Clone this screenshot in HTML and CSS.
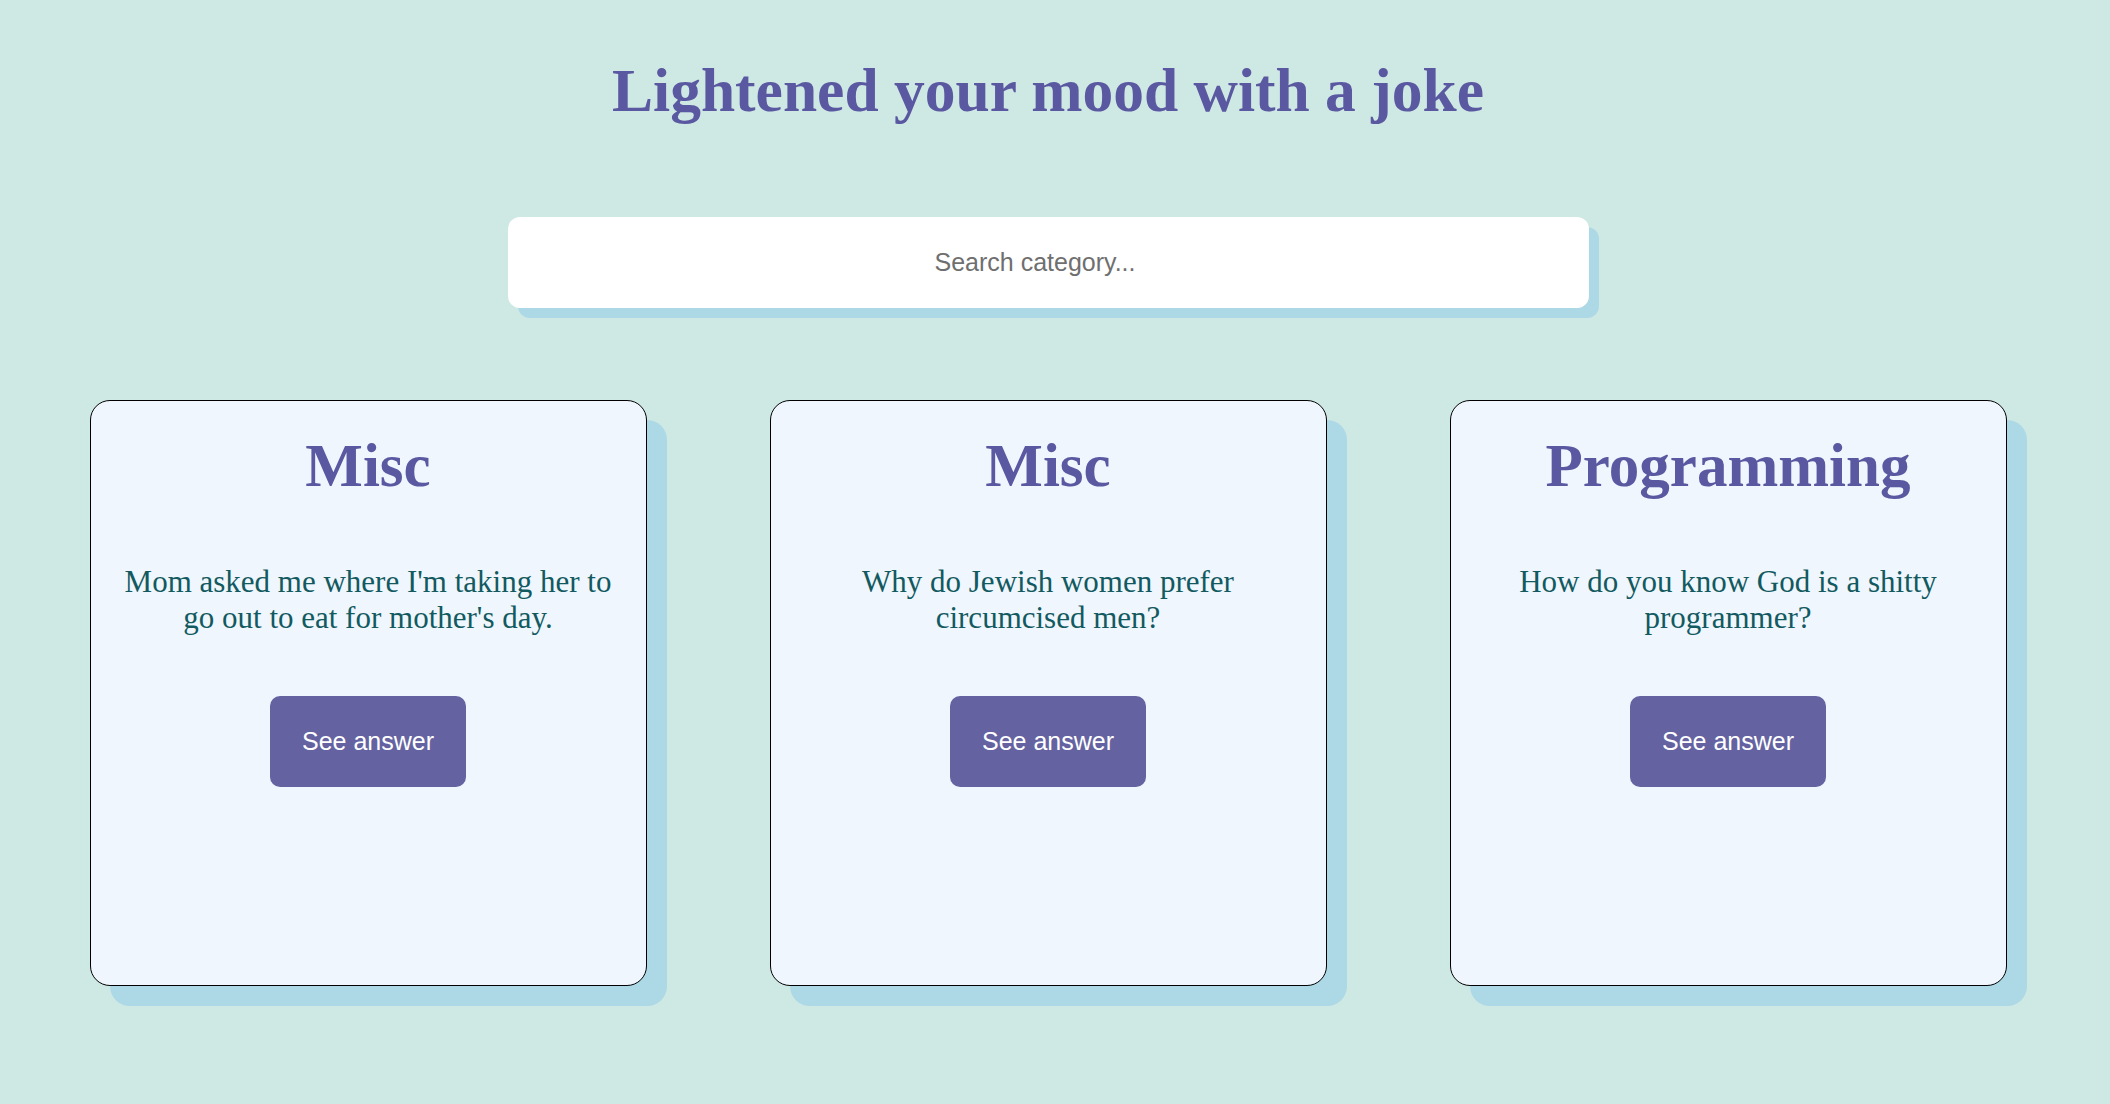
FILE: index.html
```html
<!DOCTYPE html>
<html lang="en">
<head>
<meta charset="utf-8">
<title>Jokes</title>
<link rel="stylesheet" href="styles.css">
</head>
<body>
<div class="page">
  <h1 class="title">Lightened your mood with a joke</h1>
  <div class="search-wrap">
    <input class="search" type="text" placeholder="Search category...">
  </div>
  <div class="cards">
    <div class="card">
      <h2 class="card-title">Misc</h2>
      <p class="joke">Mom asked me where I'm taking her to go out to eat for mother's day.</p>
      <button class="btn">See answer</button>
    </div>
    <div class="card">
      <h2 class="card-title">Misc</h2>
      <p class="joke">Why do Jewish women prefer circumcised men?</p>
      <button class="btn">See answer</button>
    </div>
    <div class="card">
      <h2 class="card-title">Programming</h2>
      <p class="joke">How do you know God is a shitty programmer?</p>
      <button class="btn">See answer</button>
    </div>
  </div>
</div>
</body>
</html>
```

FILE: styles.css
```css
* { box-sizing: border-box; }

html {
  background: #cee8e4;
}

body {
  margin: 0;
  background: #cee8e4;
  font-family: "Liberation Serif", "Times New Roman", serif;
}

.page {
  width: calc(100% - 14px);
  padding-bottom: 60px;
}

.title {
  margin: 0;
  padding-top: 55px;
  text-align: center;
  font-size: 61.5px;
  font-weight: bold;
  line-height: normal;
  color: #5a58a1;
}

.search-wrap {
  margin-top: 91px;
  display: flex;
  justify-content: center;
}

.search {
  width: 1081px;
  height: 91px;
  border: none;
  border-radius: 12px;
  background: #ffffff;
  box-shadow: 10px 10px 0 #add8e6;
  font-family: "Liberation Sans", Arial, sans-serif;
  font-size: 25px;
  text-align: center;
  padding: 0 26px 0 0;
  color: #333;
  outline: none;
}

.search::placeholder {
  color: #6f6f6f;
}

.cards {
  margin-top: 92px;
  display: flex;
  justify-content: center;
  gap: 123px;
}

.card {
  width: 557px;
  height: 586px;
  border: 1px solid #000;
  border-radius: 20px;
  background: #eff6fe;
  box-shadow: 20px 20px 0 #add8e6;
  text-align: center;
  padding: 0 30px;
}

.card-title {
  margin: 30px 0 0;
  font-size: 61px;
  font-weight: bold;
  line-height: normal;
  color: #5a58a1;
}

.joke {
  margin: 63px 0 0;
  font-size: 31px;
  line-height: normal;
  color: #125a60;
}

.btn {
  margin-top: 60px;
  height: 91px;
  padding: 0 32px;
  border: none;
  border-radius: 10px;
  background: #6562a1;
  color: #ffffff;
  font-family: "Liberation Sans", Arial, sans-serif;
  font-size: 25px;
  cursor: pointer;
}
```
